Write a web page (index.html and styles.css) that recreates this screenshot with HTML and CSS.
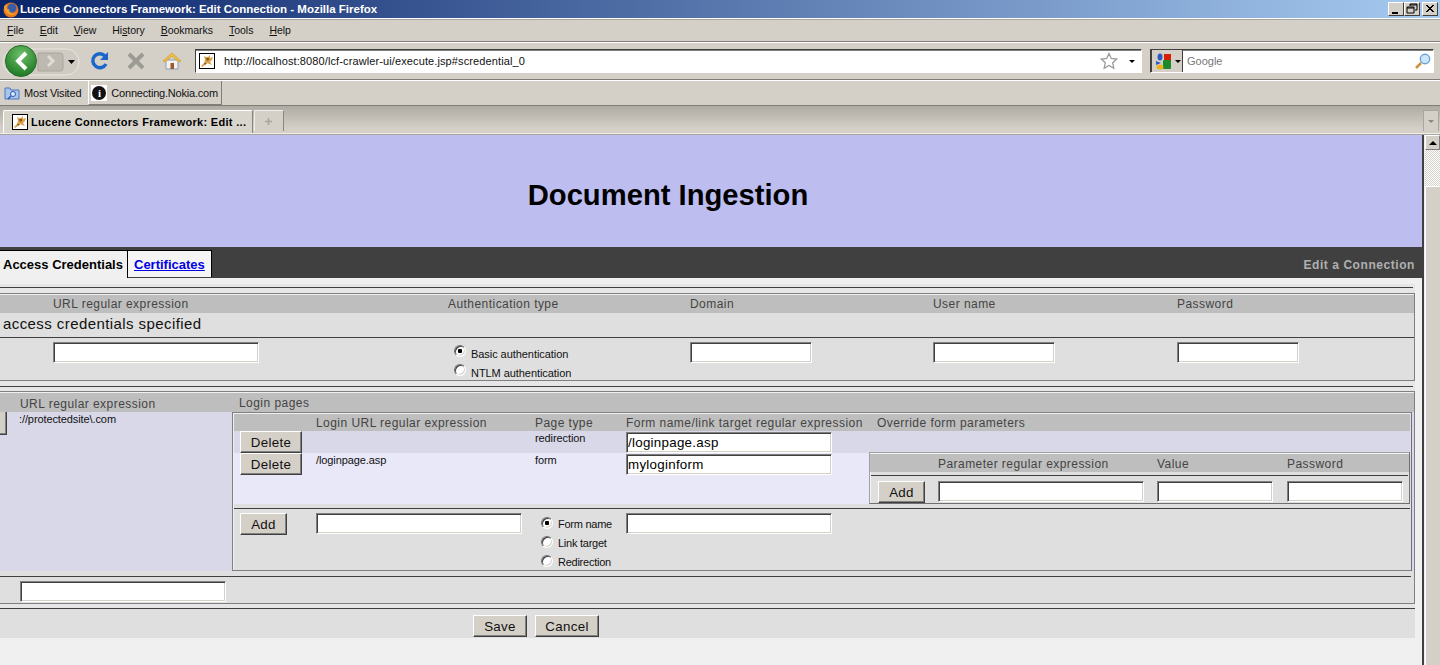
FILE: index.html
```html
<!DOCTYPE html>
<html lang="en">
<head>
<meta charset="utf-8">
<title>Lucene Connectors Framework: Edit Connection - Mozilla Firefox</title>
<link rel="stylesheet" href="styles.css">
</head>
<body>
<div class="window">
  <svg width="0" height="0" class="defs"><defs>
    <symbol id="tomcat" viewBox="0 0 16 16">
      <rect x="0.5" y="0.5" width="15" height="15" fill="#fff" stroke="#000"/>
      <path d="M2 13 L5 10 L6 7 L5 3 L7 4 L9 4 L11 2 L11 5 L14 4 L13 7 L11 9 L13 12 L10 11 L8 10 L6 12 L3 14 Z" fill="#dba24a"/>
      <path d="M7 5 L10 5 L10 7 L8 8 Z M5 10 L8 10 L6 12 Z" fill="#8a5a1c"/>
    </symbol>
  </defs></svg>

  <header class="titlebar">
    <svg class="ff-logo" width="17" height="17" viewBox="0 0 17 17"><circle cx="9" cy="9" r="7.5" fill="#e8741c"/><circle cx="10" cy="7" r="4.5" fill="#3a5fa8"/><path d="M2 6 C3 14 11 17 15 11 C12 14 7 13 7 8 C5 9 4 8 5 3 C3 4 2 5 2 6Z" fill="#f0a030"/></svg>
    <span class="title-text">Lucene Connectors Framework: Edit Connection - Mozilla Firefox</span>
    <div class="win-btns">
      <span class="win-btn"><svg width="14" height="12" viewBox="0 0 14 12"><rect x="3" y="9" width="6" height="2" fill="#000"/></svg></span>
      <span class="win-btn"><svg width="14" height="12" viewBox="0 0 14 12"><path d="M5 1h7v6h-2M5 1v2M5 2h7" fill="none" stroke="#000"/><path d="M2 4h7v6H2zM2 5h7" fill="none" stroke="#000"/></svg></span>
      <span class="win-btn win-close"><svg width="14" height="12" viewBox="0 0 14 12"><path d="M3 2l7 7M4 2l7 7M10 2l-7 7M11 2l-7 7" stroke="#000"/></svg></span>
    </div>
  </header>

  <nav class="menubar">
    <span><u>F</u>ile</span><span><u>E</u>dit</span><span><u>V</u>iew</span><span>Hi<u>s</u>tory</span><span><u>B</u>ookmarks</span><span><u>T</u>ools</span><span><u>H</u>elp</span>
  </nav>

  <div class="navbar">
    <svg class="back-group" width="78" height="32" viewBox="0 0 78 32">
      <defs><radialGradient id="gr" cx="50%" cy="30%" r="70%"><stop offset="0" stop-color="#6fbf6a"/><stop offset="1" stop-color="#1c7a22"/></radialGradient></defs>
      <rect x="1" y="4" width="76" height="26" rx="13" fill="#cfcbc3" stroke="#e8e6e0"/>
      <path d="M36 8h22q3 0 3 3v12q0 3-3 3H36z" fill="#bdb9b1" stroke="#aaa69e"/>
      <circle cx="19" cy="16" r="15.5" fill="url(#gr)" stroke="#2b6b2f"/>
      <path d="M24 8l-8 8 8 8" fill="none" stroke="#fff" stroke-width="4"/>
      <path d="M46 11l5 5-5 5" fill="none" stroke="#dedcd6" stroke-width="3"/>
      <path d="M66 15h7l-3.5 4z" fill="#000"/>
    </svg>
    <svg class="nav-icon nav-reload" width="20" height="20" viewBox="0 0 20 20"><path d="M16 13a7 7 0 1 1-1-8" fill="none" stroke="#1a66cc" stroke-width="3.4"/><path d="M18 1v8h-8z" fill="#1a66cc"/></svg>
    <svg class="nav-icon nav-stop" width="20" height="20" viewBox="0 0 20 20"><path d="M3 3l14 14M17 3L3 17" stroke="#9b9b94" stroke-width="4"/></svg>
    <svg class="nav-icon nav-home" width="20" height="20" viewBox="0 0 20 20"><path d="M4 9v9h12V9z" fill="#f4f2ea" stroke="#8aa0c0"/><path d="M1 10l9-8 9 8-2 1-7-6-7 6z" fill="#f0c040" stroke="#c89020" stroke-width=".6"/><rect x="8.5" y="12" width="3.5" height="6" fill="#9a5a30"/></svg>
    <div class="urlbar">
      <svg class="favicon" width="16" height="16"><use href="#tomcat"/></svg>
      <span class="url-text">http://localhost:8080/lcf-crawler-ui/execute.jsp#scredential_0</span>
      <svg class="star" width="18" height="18" viewBox="0 0 18 18"><path d="M9 1.5l2.3 5 5.4.6-4 3.7 1.1 5.4L9 13.500l-4.800 2.700 1.100-5.400-4-3.700 5.400-.6z" fill="#fff" stroke="#9a9a9a" stroke-width="1.300"/></svg>
      <span class="drop"></span>
    </div>
    <div class="searchbar">
      <span class="engine">
        <svg width="17" height="17" viewBox="0 0 17 17"><rect x="9" y="1" width="7" height="7" fill="#d81e05"/><rect x="8" y="7" width="8" height="9" rx="1" fill="#1a8a2a"/><ellipse cx="5" cy="4" rx="2.500" ry="3.500" fill="#2a5cc0"/><path d="M1 8l5 2-5 2z" fill="#2a5cc0"/><ellipse cx="5" cy="14" rx="3.500" ry="2.500" fill="#f0b020"/></svg>
        <span class="drop"></span>
      </span>
      <span class="search-text">Google</span>
      <svg class="magnifier" width="17" height="17" viewBox="0 0 17 17"><path d="M7 10l-5 5" stroke="#d09040" stroke-width="2.500"/><circle cx="11" cy="6" r="4.700" fill="#cfe6fa" stroke="#6aa4d8" stroke-width="1.400"/></svg>
    </div>
  </div>

  <div class="bookmarks">
    <span class="bookmark">
      <svg width="16" height="16" viewBox="0 0 16 16"><path d="M1 3h5l1 2h8v9H1z" fill="#a8c4ec" stroke="#4a78c0"/><circle cx="9" cy="9" r="2.500" fill="#dcebfb" stroke="#2a58a8"/><path d="M7 11l-3 3" stroke="#2a58a8" stroke-width="1.500"/></svg>
      Most Visited
    </span>
    <span class="bookmark bookmark-active">
      <span class="info-box"><span class="info-dot">i</span></span>
      Connecting.Nokia.com
    </span>
  </div>

  <div class="tabbar">
    <div class="tab">
      <svg width="16" height="16"><use href="#tomcat"/></svg>
      <span class="tab-text">Lucene Connectors Framework: Edit ...</span>
    </div>
    <div class="newtab"><svg width="9" height="9" viewBox="0 0 9 9"><path d="M4.500 1v7M1 4.500h7" stroke="#a8a59e" stroke-width="1.500"/></svg></div>
    <div class="tablist"><span class="tablist-arrow"></span></div>
  </div>

  <div class="viewport">
    <main class="page">
      <div class="banner"><h1 class="heading">Document Ingestion</h1></div>

      <div class="tabstrip">
        <span class="ptab ptab-active">Access Credentials</span>
        <span class="ptab ptab-link"><a href="#certificates">Certificates</a></span>
        <span class="strip-title">Edit a Connection</span>
      </div>

      <form class="form">
        <div class="rule rule-first"></div>

        <section class="box box-one">
          <div class="cred-grid head head-one">
            <span></span><span>URL regular expression</span><span>Authentication type</span><span>Domain</span><span>User name</span><span>Password</span>
          </div>
          <div class="empty-row">access credentials specified</div>
          <div class="inner-rule"></div>
          <div class="cred-grid add-row">
            <span></span>
            <span><input class="field w206" type="text"></span>
            <span class="radios radios-auth">
              <label class="radio-line"><input class="radio" type="radio" name="auth" checked>Basic authentication</label>
              <label class="radio-line"><input class="radio" type="radio" name="auth">NTLM authentication</label>
            </span>
            <span><input class="field w122" type="text"></span>
            <span><input class="field w122" type="text"></span>
            <span><input class="field w122" type="text"></span>
          </div>
        </section>

        <div class="rule rule-two"></div>

        <section class="box box-two">
          <div class="two-head head">
            <span class="two-url">URL regular expression</span>
            <span class="two-login">Login pages</span>
          </div>
          <div class="two-body">
            <div class="url-cell">
              <span class="clipped-btn"></span>
              <span class="small url-value">://protectedsite\.com</span>
            </div>
            <div class="login-box">
              <div class="login-grid head head-login">
                <span></span><span>Login URL regular expression</span><span>Page type</span><span>Form name/link target regular expression</span><span class="override-label">Override form parameters</span>
              </div>
              <div class="login-grid row-a">
                <span class="cell-btn"><button class="btn" type="button">Delete</button></span>
                <span></span>
                <span class="small type-cell">redirection</span>
                <span><input class="field w206" type="text" value="/loginpage.asp"></span>
                <span></span>
              </div>
              <div class="login-grid row-b">
                <span class="cell-btn"><button class="btn" type="button">Delete</button></span>
                <span class="small type-cell">/loginpage.asp</span>
                <span class="small type-cell">form</span>
                <span><input class="field w206" type="text" value="myloginform"></span>
                <div class="param-box">
                  <div class="param-grid head head-param">
                    <span></span><span>Parameter regular expression</span><span>Value</span><span>Password</span>
                  </div>
                  <div class="param-gap"></div>
                  <div class="inner-rule"></div>
                  <div class="param-grid param-row">
                    <span class="param-add"><button class="btn btn-add" type="button">Add</button></span>
                    <span><input class="field w206" type="text"></span>
                    <span><input class="field w116" type="text"></span>
                    <span><input class="field w116" type="text"></span>
                  </div>
                </div>
              </div>
              <div class="login-gap"></div>
              <div class="inner-rule"></div>
              <div class="login-grid row-add">
                <span class="cell-add"><button class="btn btn-add" type="button">Add</button></span>
                <span class="cell-add"><input class="field w206" type="text"></span>
                <span class="radios radios-page">
                  <label class="radio-line"><input class="radio" type="radio" name="page" checked>Form name</label>
                  <label class="radio-line"><input class="radio" type="radio" name="page">Link target</label>
                  <label class="radio-line"><input class="radio" type="radio" name="page">Redirection</label>
                </span>
                <span class="cell-add"><input class="field w206" type="text"></span>
                <span></span>
              </div>
            </div>
          </div>
          <div class="two-gap"></div>
          <div class="inner-rule rule-short"></div>
          <div class="two-foot"><input class="field w206" type="text"></div>
        </section>

        <div class="rule rule-three"></div>

        <div class="actions">
          <button class="btn btn-save" type="button">Save</button>
          <button class="btn btn-cancel" type="button">Cancel</button>
        </div>
      </form>
    </main>
    <aside class="scrollbar">
      <span class="sb-up"><span class="sb-arrow"></span></span>
      <span class="sb-track"></span>
      <span class="sb-thumb"></span>
    </aside>
  </div>
</div>
</body>
</html>
```

FILE: styles.css
```css
* { box-sizing: border-box; }
html, body { margin: 0; padding: 0; height: 100%; overflow: hidden; }
body { font-family: "Liberation Sans", Arial, sans-serif; background: #d4d0c8; color: #000; }
.defs { display: block; height: 0; width: 0; }
.window { display: flex; flex-direction: column; height: 665px; width: 1440px; overflow: hidden; }

/* ---------- browser chrome ---------- */
.titlebar { height: 18px; flex: none; display: flex; align-items: center; padding-left: 2px; background: linear-gradient(90deg, #0a246a 0%, #a6caf0 100%); }
.ff-logo { flex: none; margin-right: 1px; }
.title-text { color: #fff; font: bold 11.500px "Liberation Sans", Arial, sans-serif; white-space: nowrap; }
.win-btns { margin-left: auto; display: flex; padding-right: 2px; }
.win-btn { width: 16px; height: 14px; display: flex; align-items: center; justify-content: center; background: #d4d0c8; border: 1px solid; border-color: #fff #404040 #404040 #fff; }
.win-close { margin-left: 2px; }

.menubar { height: 24px; flex: none; display: flex; align-items: center; padding-left: 7px; gap: 16px; font-size: 10.500px; letter-spacing: -.03px; border-top: 1px solid #fff; box-shadow: inset 0 1px 0 #a8a59e; border-bottom: 1px solid #807d76; color: #111; }

.navbar { height: 38px; flex: none; display: flex; align-items: center; padding-left: 2px; border-top: 1px solid #fff; border-bottom: 1px solid #807d76; }
.back-group { flex: none; margin-right: 10px; }
.nav-icon { flex: none; margin-right: 16px; }
.nav-home { margin-right: 13px; }
.urlbar { width: 947px; height: 24px; flex: none; display: flex; align-items: center; background: #fff; border: 1px solid; border-color: #404040 #fff #fff #404040; box-shadow: inset 0 1px 0 #808080; }
.favicon { flex: none; margin-left: 3px; }
.url-text { margin-left: 9px; font-size: 11px; color: #111; flex: 1; letter-spacing: .11px; }
.star { flex: none; margin-right: 11px; }
.drop { width: 0; height: 0; border: 3px solid transparent; border-top: 3px solid #000; border-bottom: 0; flex: none; }
.urlbar .drop { margin-right: 6px; }
.searchbar { width: 284px; height: 24px; flex: none; margin-left: 8px; display: flex; align-items: center; background: #fff; border: 1px solid; border-color: #404040 #fff #fff #404040; box-shadow: inset 0 1px 0 #808080; }
.engine { width: 32px; height: 22px; flex: none; display: flex; align-items: center; gap: 3px; padding-left: 3px; background: #d4d0c8; border-right: 1px solid #404040; border-left: 1px solid #404040; }
.search-text { margin-left: 4px; font-size: 11px; color: #777; flex: 1; }
.magnifier { flex: none; margin-right: 2px; }

.bookmarks { height: 26px; flex: none; display: flex; align-items: stretch; padding-left: 4px; font-size: 11px; letter-spacing: -.2px; border-top: 1px solid #fff; border-bottom: 1px solid #807d76; color: #111; }
.bookmark { display: flex; align-items: center; gap: 4px; white-space: nowrap; }
.bookmark-active { margin-left: 7px; padding: 0 2px; gap: 4px; width: 134px; border: 1px solid; border-color: #fff #807d76 #807d76 #fff; border-top: 0; }
.info-box { width: 16px; height: 16px; flex: none; display: flex; align-items: center; justify-content: center; background: #fff; }
.info-dot { width: 14px; height: 14px; border-radius: 50%; background: #111; color: #fff; font: bold 11px/14px "Liberation Serif", serif; text-align: center; }

.tabbar { height: 29px; flex: none; display: flex; align-items: flex-end; padding: 0 1px 3px 3px; background: linear-gradient(180deg, #aeaba3 0%, #d4d0c8 80%); border-bottom: 1px solid #a8a59e; box-shadow: inset 0 -1px 0 #f0eee8; }
.tab { width: 250px; height: 23px; flex: none; display: flex; align-items: center; gap: 3px; padding-left: 8px; margin-bottom: -2px; background: #d8d5cd; border: 1px solid #8a877f; border-top-color: #fff; border-left-color: #fff; border-bottom: 0; border-radius: 2px 2px 0 0; }
.tab-text { font-size: 11px; font-weight: bold; letter-spacing: .3px; white-space: nowrap; color: #000; }
.newtab { width: 30px; height: 21px; flex: none; margin-left: 1px; display: flex; align-items: center; justify-content: center; padding-right: 2px; background: #d4d0c8; border: 1px solid #8a877f; border-bottom: 0; border-top-color: #eee; border-left-color: #eee; }
.tablist { width: 16px; height: 21px; flex: none; margin-left: auto; display: flex; align-items: center; justify-content: center; background: #d4d0c8; border: 1px solid #a8a59e; border-bottom: 0; }
.tablist-arrow { width: 0; height: 0; border: 3px solid transparent; border-top: 3px solid #8a877f; border-bottom: 0; }

/* ---------- page ---------- */
.viewport { flex: 1; min-height: 0; display: flex; }
.page { width: 1422px; flex: none; background: #f0f0f0; }
.banner { height: 112px; display: flex; align-items: center; justify-content: center; padding-right: 86px; background: #bdbdef; }
.heading { margin: 0; font-size: 29.200px; font-weight: bold; color: #000; padding-top: 8px; }

.tabstrip { height: 31px; display: flex; align-items: flex-end; background: #404040; }
.ptab { height: 28px; display: flex; align-items: center; font-size: 13px; font-weight: bold; }
.ptab-active { width: 128px; padding-left: 3px; background: #f0f0f0; border-top: 1px solid #000; border-right: 1px solid #000; }
.ptab-link { width: 84px; height: 27px; margin-bottom: 1px; padding-left: 6px; background: #f5f5f5; border: 1px solid #000; border-left: 0; border-bottom: 0; }
.ptab-link a { color: #0000e6; }
.strip-title { margin-left: auto; align-self: center; padding: 4px 7px 0 0; font-size: 12px; font-weight: bold; color: #b0b0b0; letter-spacing: .56px; }

.form { width: 1415px; margin-top: 6px; background: #e6e6e6; padding-top: 3px; }
.rule { height: 1px; background: #404040; width: 1413px; }
.rule-first { margin-bottom: 5px; }
.rule-two { margin: 5px 0 4px; }
.rule-three { margin-top: 4px; width: 1415px; }
.inner-rule { height: 1px; background: #404040; }

.box { border: 1px solid #808080; border-left: 0; border-bottom-width: 1px; background: #dfdfdf; padding-top: 1px; width: 1415px; box-shadow: inset 0 1px 0 #f0f0f0; }
.head { background: #bebebe; font-size: 12px; letter-spacing: .45px; color: #444; white-space: nowrap; padding-top: 1px; }
.cred-grid { display: grid; grid-template-columns: 53px 395px 242px 243px 244px 1fr; }
.head-one { height: 18px; align-items: start; padding-top: 2px; line-height: 14px; }
.empty-row { height: 24px; padding-left: 3px; font-size: 15px; letter-spacing: .42px; line-height: 22px; color: #111; }
.add-row { height: 42px; padding-top: 4px; background: #dfdfdf; }

.field { display: block; height: 21px; padding: 0 0 0 1px; margin: 0; background: #fff; font: 13.330px "Liberation Sans", Arial, sans-serif; letter-spacing: .28px; color: #000; outline: 0; border: 1px solid; border-color: #808080 #fff #fff #808080; box-shadow: inset 1px 1px 0 #404040, inset -1px -1px 0 #d4d0c8; }
.w206 { width: 206px; }
.w122 { width: 122px; }
.w116 { width: 116px; }

.radios { display: flex; flex-direction: column; font-size: 11px; letter-spacing: -.06px; color: #111; }
.radios-auth { padding-left: 6px; margin-top: 2px; }
.radio-line { display: flex; align-items: flex-start; height: 19px; line-height: 21px; white-space: nowrap; }
.radio { appearance: none; -webkit-appearance: none; width: 12px; height: 12px; flex: none; margin: 1px 5px 0 0; border-radius: 50%; background: #fff; border: 1px solid; border-color: #707070 #fff #fff #707070; box-shadow: inset 1px 1px 0 #404040, inset -1px -1px 0 #d4d0c8; }
.radio:checked { background: radial-gradient(circle, #000 0 2px, #fff 2.500px); }

.two-head { display: flex; height: 19px; align-items: center; padding-top: 0; }
.two-url { margin-left: 20px; width: 219px; padding-top: 2px; }
.two-body { display: flex; height: 159px; background: #d8d8e8; }
.url-cell { width: 232px; flex: none; display: flex; align-items: flex-start; }
.clipped-btn { width: 7px; height: 23px; flex: none; background: #d4d0c8; border-right: 1px solid #404040; border-bottom: 1px solid #404040; box-shadow: inset -1px -1px 0 #808080; }
.url-value { margin-left: 12px; }
.small { font-size: 11px; letter-spacing: -.1px; color: #111; line-height: 14px; }

.login-box { width: 1180px; flex: none; height: 159px; background: #dfdfdf; border: 1px solid #808080; border-right-color: #707080; padding: 1px 0 0 0; box-shadow: inset 1px 1px 0 #f0f0f0; }
.login-grid { display: grid; grid-template-columns: 82px 219px 91px 243px 1fr; margin-left: 1px; margin-right: 1px; }
.head-login { height: 17px; align-items: center; margin-right: 1px; }
.override-label { padding-left: 8px; }
.row-a { height: 22px; background: #d8d8e8; }
.row-b { height: 51px; background: #e8e8f8; }
.cell-btn { padding-left: 6px; }
.row-a .field, .row-b .field { margin: 1px 0 0 0; height: 21px; }
.btn { display: block; height: 22px; margin: 0; padding: 0; background: #d4d0c8; font: 13.330px "Liberation Sans", Arial, sans-serif; letter-spacing: .32px; color: #111; border: 1px solid; border-color: #fff #404040 #404040 #fff; box-shadow: inset -1px -1px 0 #808080; width: 62px; }
.btn-add { width: 47px; }
.btn-save { width: 54px; }
.btn-cancel { width: 64px; }

.param-box { height: 52px; margin-top: -1px; border: 1px solid #a0a0a0; border-right-color: #707070; border-bottom-color: #707070; padding-top: 1px; background: #dfdfdf; box-shadow: inset 1px 1px 0 #f4f4f4; display: flex; flex-direction: column; }
.param-grid { display: grid; grid-template-columns: 68px 219px 130px 1fr; }
.head-param { height: 18px; align-items: center; flex: none; }
.param-gap { height: 3px; flex: none; }
.param-box .inner-rule { margin: 0 1px; flex: none; }
.param-row { padding-top: 5px; }
.param-add { padding-left: 8px; }
.param-box .btn { margin: 0; }
.param-box .field { margin: 0; }

.login-gap { height: 4px; }
.login-box > .inner-rule { margin: 0 1px; }
.row-add { padding-top: 4px; }
.cell-add:first-child { padding-left: 6px; }
.radios-page { padding-left: 6px; margin-top: 3px; letter-spacing: -.25px; }
.radios-page .radio-line { line-height: 17px; }

.two-gap { height: 5px; }
.rule-short { width: 1411px; }
.two-foot { height: 26px; padding: 4px 0 0 20px; }

.actions { height: 29px; display: flex; align-items: flex-start; padding: 6px 0 0 473px; gap: 8px; background: #dfdfdf; width: 1415px; }

/* ---------- scrollbar ---------- */
.scrollbar { width: 18px; flex: none; display: flex; flex-direction: column; background: #eee; border-left: 2px solid #404040; padding-left: 1px; }
.sb-up { height: 15px; flex: none; display: flex; align-items: center; justify-content: center; background: #d4d0c8; border: 1px solid; border-color: #fff #808080 #808080 #fff; }
.sb-arrow { width: 0; height: 0; border: 4px solid transparent; border-bottom: 4px solid #000; border-top: 0; }
.sb-track { height: 36px; flex: none; background: repeating-conic-gradient(#d4d0c8 0 25%, #fff 0 50%) 0 0 / 2px 2px; }
.sb-thumb { flex: 1; background: #d4d0c8; border-top: 1px solid #fff; border-left: 1px solid #fff; }
```
